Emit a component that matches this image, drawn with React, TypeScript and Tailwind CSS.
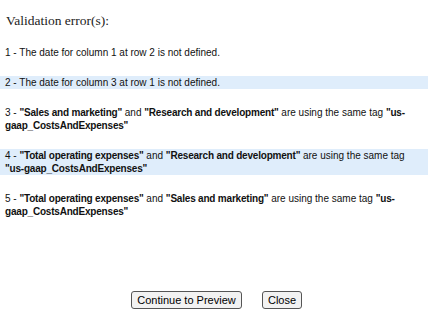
export default function App() {
  const b = "font-bold tracking-[-0.2px]";
  return (
    <div className="w-[433px] h-[322px] bg-white relative" style={{ fontFamily: '"Liberation Sans", Arial, sans-serif' }}>
      <div className="pt-[12px] pl-[6px] text-[13.5px] leading-[18px] text-[#222]" style={{ fontFamily: '"Liberation Serif", "Times New Roman", serif' }}>
        Validation error(s):
      </div>
      <div className="mt-[16px] w-[428px] flex flex-col gap-[17px] text-[10px] leading-[13px] text-[#111]">
        <div className="px-[5px]">1 - The date for column 1 at row 2 is not defined.</div>
        <div className="px-[5px] bg-[#dfedfb]">2 - The date for column 3 at row 1 is not defined.</div>
        <div className="pl-[5px] pr-[20px]">
          3 - <span className={b}>"Sales and marketing"</span> and <span className={b}>"Research and development"</span> are using the same tag <span className={b}>"us-gaap_CostsAndExpenses"</span>
        </div>
        <div className="pl-[5px] pr-[20px] bg-[#dfedfb]">
          4 - <span className={b}>"Total operating expenses"</span> and <span className={b}>"Research and development"</span> are using the same tag <span className={b}>"us-gaap_CostsAndExpenses"</span>
        </div>
        <div className="pl-[5px] pr-[20px]">
          5 - <span className={b}>"Total operating expenses"</span> and <span className={b}>"Sales and marketing"</span> are using the same tag <span className={b}>"us-gaap_CostsAndExpenses"</span>
        </div>
      </div>
      <div className="absolute left-[131px] top-[291px] flex gap-[20px]">
        <button className="h-[18px] w-[111px] border border-[#555] rounded-[3px] bg-[#f2f2f2] text-[11px] leading-[16px] text-black">Continue to Preview</button>
        <button className="h-[18px] w-[40px] border border-[#555] rounded-[3px] bg-[#f2f2f2] text-[11px] leading-[16px] text-black">Close</button>
      </div>
    </div>
  );
}
